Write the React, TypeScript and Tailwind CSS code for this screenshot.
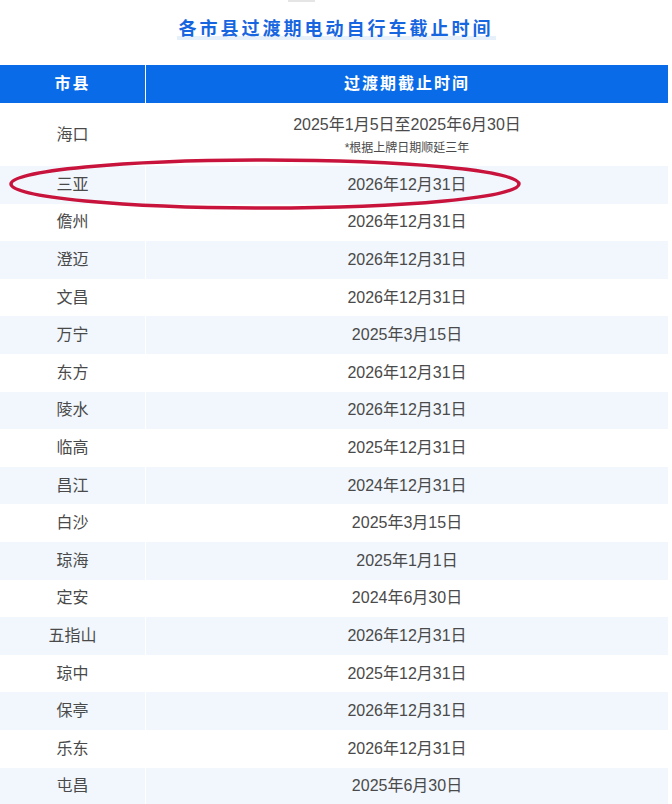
const rows: [string, string][] = [
  ["三亚", "2026年12月31日"],
  ["儋州", "2026年12月31日"],
  ["澄迈", "2026年12月31日"],
  ["文昌", "2026年12月31日"],
  ["万宁", "2025年3月15日"],
  ["东方", "2026年12月31日"],
  ["陵水", "2026年12月31日"],
  ["临高", "2025年12月31日"],
  ["昌江", "2024年12月31日"],
  ["白沙", "2025年3月15日"],
  ["琼海", "2025年1月1日"],
  ["定安", "2024年6月30日"],
  ["五指山", "2026年12月31日"],
  ["琼中", "2025年12月31日"],
  ["保亭", "2026年12月31日"],
  ["乐东", "2026年12月31日"],
  ["屯昌", "2025年6月30日"],
];

export default function App() {
  return (
    <div
      className="relative w-[672px] h-[804px] overflow-hidden bg-white text-[#4a4a4a]"
      style={{ fontFamily: '"Liberation Sans", "Noto Sans CJK SC", sans-serif' }}
    >
      <div className="flex justify-center">
        <div className="w-[27px] h-[2px] bg-[#e5e5e5] -ml-[70px]" />
      </div>
      <div className="flex justify-center pt-[14px] h-[63px]">
        <div className="h-[24px] px-[2px] text-[18px] font-bold tracking-[3px] text-[#1766e0] bg-[linear-gradient(to_top,#e6f0fb_4px,transparent_4px)]">
          各市县过渡期电动自行车截止时间
        </div>
      </div>
      <div className="w-[668px]">
        <div className="flex h-[38px] bg-[#0a6be8] text-white font-bold text-[16px] tracking-[2px]">
          <div className="w-[146px] flex items-center justify-center border-r border-white">市县</div>
          <div className="flex-1 flex items-center justify-center">过渡期截止时间</div>
        </div>
        <div className="flex h-[63px] text-[16px]">
          <div className="w-[146px] flex items-center justify-center border-r border-white">海口</div>
          <div className="flex-1 flex flex-col items-center justify-center gap-[2px]">
            <div>2025年1月5日至2025年6月30日</div>
            <div className="text-[12px]">*根据上牌日期顺延三年</div>
          </div>
        </div>
        {rows.map(([city, date], i) => (
          <div key={city} className={`flex h-[37.6px] text-[16px] ${i % 2 === 0 ? "bg-[#f1f7fd]" : "bg-white"}`}>
            <div className="w-[146px] flex items-center justify-center border-r border-white">{city}</div>
            <div className="flex-1 flex items-center justify-center">{date}</div>
          </div>
        ))}
      </div>
      <svg className="absolute left-0 top-0 pointer-events-none" width="672" height="260">
        <ellipse cx="265" cy="184" rx="254" ry="24" fill="none" stroke="#c8143c" strokeWidth="3.5" />
      </svg>
    </div>
  );
}
